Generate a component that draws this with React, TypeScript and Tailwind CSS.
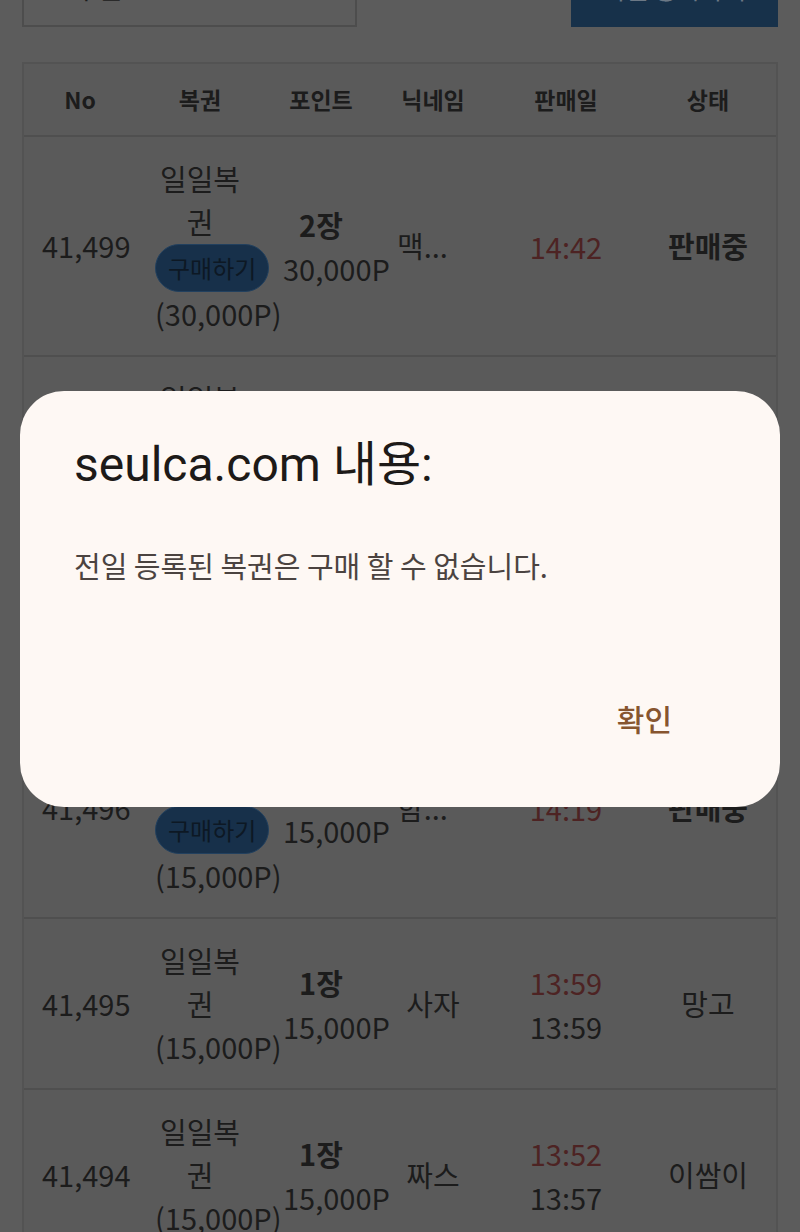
const font = { fontFamily: '"Noto Sans CJK KR", "Noto Sans", sans-serif' };

type Row = {
  no: string;
  buy: boolean;
  price: string;
  qty: string;
  amount: string;
  nick: string;
  nickLeft?: boolean;
  times: { t: string; red: boolean }[];
  status: string;
  bold: boolean;
};

const rows: Row[] = [
  { no: "41,499", buy: true, price: "(30,000P)", qty: "2장", amount: "30,000P", nick: "맥...", nickLeft: true, times: [{ t: "14:42", red: true }], status: "판매중", bold: true },
  { no: "41,498", buy: false, price: "(15,000P)", qty: "1장", amount: "15,000P", nick: "사자", times: [{ t: "14:31", red: true }, { t: "14:33", red: false }], status: "망고", bold: false },
  { no: "41,497", buy: false, price: "(15,000P)", qty: "1장", amount: "15,000P", nick: "짜스", times: [{ t: "14:25", red: true }, { t: "14:28", red: false }], status: "이쌈이", bold: false },
  { no: "41,496", buy: true, price: "(15,000P)", qty: "1장", amount: "15,000P", nick: "함...", nickLeft: true, times: [{ t: "14:19", red: true }], status: "판매중", bold: true },
  { no: "41,495", buy: false, price: "(15,000P)", qty: "1장", amount: "15,000P", nick: "사자", times: [{ t: "13:59", red: true }, { t: "13:59", red: false }], status: "망고", bold: false },
  { no: "41,494", buy: false, price: "(15,000P)", qty: "1장", amount: "15,000P", nick: "짜스", times: [{ t: "13:52", red: true }, { t: "13:57", red: false }], status: "이쌈이", bold: false },
];

const pad = [
  "pl-[18px] pr-[19px]",
  "pl-[18px] pr-[18px]",
  "pl-[20px] pr-[20px]",
  "pl-[18px] pr-[18px]",
  "pl-[18px] pr-[18px]",
  "pl-[18px] pr-[23px]",
];

export default function App() {
  return (
    <div className="relative h-[1232px] overflow-hidden bg-[#5c5c5c] text-[#1c1c1c]" style={font}>
      <div className="-mt-[50px] px-[22px]">
        <div className="flex items-end justify-between">
          <div className="flex h-[77px] w-[335px] items-center border-2 border-[#4d4d4d] pl-[50px] text-[27px] text-[#1c1c1c]">
            구분
          </div>
          <div className="flex h-[77px] w-[207px] items-center justify-center bg-[#17314a] text-[25px] text-[#6d7986]">
            복권 등록하기
          </div>
        </div>

        <div className="mt-[35px] border-2 border-[#535353] bg-[#5a5a5a]">
          <table className="w-full table-fixed border-collapse text-[29px]">
            <colgroup>
              <col className="w-[113px]" />
              <col className="w-[126px]" />
              <col className="w-[116px]" />
              <col className="w-[108px]" />
              <col className="w-[158px]" />
              <col className="w-[131px]" />
            </colgroup>
            <thead>
              <tr className="h-[72px] text-[23px] font-bold">
                {["No", "복권", "포인트", "닉네임", "판매일", "상태"].map((h, i) => (
                  <th key={h} className={`${pad[i]} text-center align-middle`}>
                    {h}
                  </th>
                ))}
              </tr>
            </thead>
            <tbody>
              {rows.map((r) => (
                <tr key={r.no} className="border-t-2 border-[#4f4f4f]">
                  <td className={`${pad[0]} py-[20px] text-center align-middle`}>{r.no}</td>
                  <td className={`${pad[1]} py-[20px] text-center align-middle leading-[43px]`}>
                    <div>일일복권</div>
                    {r.buy && (
                      <div className="flex h-[49px] items-center">
                        <span className="inline-flex h-[48px] shrink-0 items-center whitespace-nowrap rounded-full border border-[#22405e] bg-[#17304a] px-[12px] text-[24px] text-[#0d1824]">
                          구매하기
                        </span>
                      </div>
                    )}
                    <div>{r.price}</div>
                  </td>
                  <td className={`${pad[2]} text-center align-middle leading-[44px]`}>
                    <div className="font-bold">{r.qty}</div>
                    <div>{r.amount}</div>
                  </td>
                  <td className={`${pad[3]} align-middle ${r.nickLeft ? "text-left" : "text-center"}`}>
                    {r.nick}
                  </td>
                  <td className={`${pad[4]} text-center align-middle leading-[44px]`}>
                    {r.times.map((t, i) => (
                      <div key={i} className={t.red ? "text-[#4d2323]" : ""}>
                        {t.t}
                      </div>
                    ))}
                  </td>
                  <td className={`${pad[5]} text-center align-middle ${r.bold ? "font-bold" : ""}`}>
                    {r.status}
                  </td>
                </tr>
              ))}
            </tbody>
          </table>
        </div>
      </div>

      <div className="absolute left-[20px] top-[391px] flex h-[416px] w-[760px] flex-col rounded-[44px] bg-[#fef8f4] pl-[54px]">
        <div
          className="mt-[46px] text-[48px] leading-[56px] text-[#1d1a18]"
          style={{ fontFamily: 'Roboto, "Noto Sans CJK KR", sans-serif' }}
        >
          seulca.com 내용:
        </div>
        <div className="mt-[54px] text-[29px] leading-[36px] text-[#4b4340]">
          전일 등록된 복권은 구매 할 수 없습니다.
        </div>
        <div className="mt-auto mb-[59px] flex justify-end pr-[94px]">
          <button className="h-[60px] px-[14px] text-[30px] font-medium text-[#87552f]">확인</button>
        </div>
      </div>
    </div>
  );
}
